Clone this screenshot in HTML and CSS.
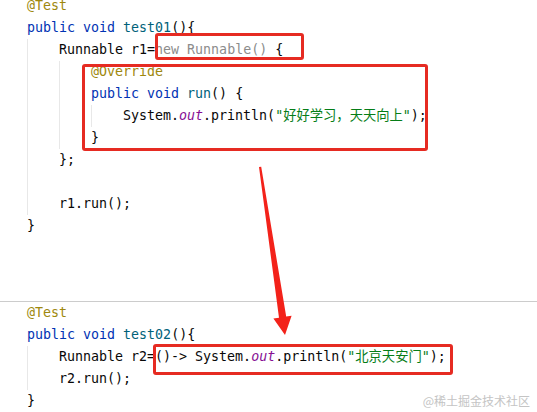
FILE: index.html
```html
<!DOCTYPE html>
<html>
<head>
<meta charset="utf-8">
<link rel="stylesheet" href="styles.css">
</head>
<body>
<div class="page">
  <div class="code first">
    <div class="ln"><span class="an">@Test</span></div>
    <div class="ln"><span class="kw">public void </span><span class="fn">test01</span>(){</div>
    <div class="body">
      <div class="ln">Runnable r1=<span class="dim">new Runnable()</span> {</div>
      <div class="body">
        <div class="ln"><span class="an">@Override</span></div>
        <div class="ln"><span class="kw">public void </span><span class="fn">run</span>() {</div>
        <div class="body">
          <div class="ln">System.<span class="st">out</span>.println(<span class="str">"好好学习，天天向上"</span>);</div>
        </div>
        <div class="ln">}</div>
      </div>
      <div class="ln">};</div>
      <div class="ln"> </div>
      <div class="ln">r1.run();</div>
    </div>
    <div class="ln">}</div>
  </div>
  <div class="sep"></div>
  <div class="code second">
    <div class="ln"><span class="an">@Test</span></div>
    <div class="ln"><span class="kw">public void </span><span class="fn">test02</span>(){</div>
    <div class="body">
      <div class="ln">Runnable r2=()-&gt; System.<span class="st">out</span>.println(<span class="str">"北京天安门"</span>);</div>
      <div class="ln">r2.run();</div>
    </div>
    <div class="ln">}</div>
  </div>

  <div class="box box1"></div>
  <div class="box box2"></div>
  <div class="box box3"></div>

  <svg class="arrow" width="537" height="412" viewBox="0 0 537 412">
    <polygon points="259,167 261.2,166.8 286.2,316.6 291.6,315.8 285,335 273.4,318.6 279,317.8" fill="#f3221a"/>
  </svg>

  <div class="mark">@稀土掘金技术社区</div>
</div>
</body>
</html>
```
FILE: styles.css
```css
html, body {
  margin: 0;
  padding: 0;
  background: #ffffff;
}
.page {
  position: relative;
  width: 537px;
  height: 412px;
  overflow: hidden;
}
.code {
  font-family: "DejaVu Sans Mono", "Noto Sans CJK SC", monospace;
  font-size: 13.3px;
  color: #080808;
  padding-left: 27px;
}
.first {
  margin-top: -5px;
}
.ln {
  height: 22px;
  line-height: 22px;
  white-space: pre;
}
.body {
  border-left: 1px solid #e8e8e8;
  padding-left: 31px;
}
.sep {
  margin-top: 64px;
  height: 1px;
  background: #cccccc;
}
.kw { color: #0033b3; }
.an { color: #9e880d; }
.fn { color: #00627a; }
.dim { color: #8c8c8c; }
.st { color: #871094; font-style: italic; }
.str { color: #067d17; }
.box {
  position: absolute;
  border: 3px solid #e62b22;
  border-radius: 3px;
  box-sizing: border-box;
}
.box1 { left: 155px; top: 33px; width: 149px; height: 27px; }
.box2 { left: 82px; top: 64px; width: 346px; height: 87px; }
.box3 { left: 153px; top: 344px; width: 300px; height: 31px; }
.arrow {
  position: absolute;
  left: 0;
  top: 0;
}
.mark {
  position: absolute;
  right: 7px;
  bottom: 3px;
  font-family: "Noto Sans CJK SC", sans-serif;
  font-size: 12px;
  color: #c4c4c4;
}
```
